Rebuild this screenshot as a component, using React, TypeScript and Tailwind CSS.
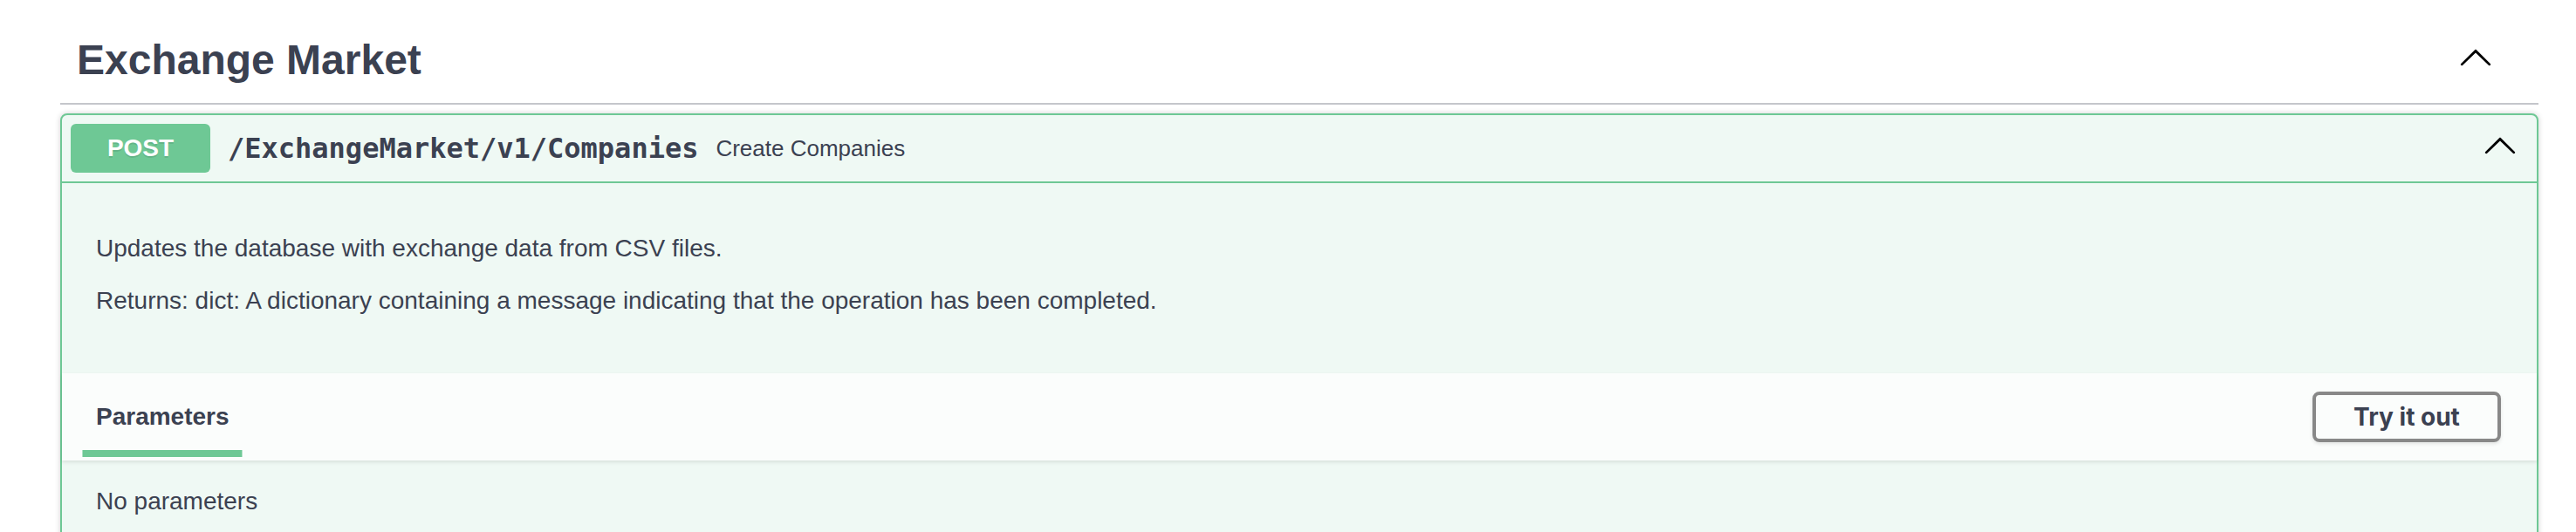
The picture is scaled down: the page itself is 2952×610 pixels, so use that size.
import React from "react";

const ArrowUp = ({ className }: { className?: string }) => (
  <svg
    width="40"
    height="40"
    viewBox="0 0 20 20"
    className={className}
    aria-hidden="true"
  >
    <path
      fill="#000"
      d="M17.418 14.908c.272.268.709.268.979 0s.271-.701 0-.969l-7.908-7.83c-.27-.268-.707-.268-.979 0l-7.908 7.83c-.27.268-.27.701 0 .969.271.268.709.268.979 0L10 7.767l7.418 7.141z"
    />
  </svg>
);

export default function App() {
  return (
    <div className="min-h-screen bg-white font-['Liberation_Sans',Arial,sans-serif] text-[#3b4151]">
      <div className="pl-[69px] pr-[43px] pt-[21px]">
        {/* Tag header */}
        <div className="flex items-center border-b-2 border-[#c4c6cb] pl-[19px] pr-[52px] pt-[20px] pb-[21px]">
          <h3 className="flex-1 text-[48px] font-bold leading-[56px] text-[#3b4151]">
            Exchange Market
          </h3>
          <ArrowUp className="mb-[8px] shrink-0" />
        </div>

        {/* Operation block */}
        <div className="mt-[10px] rounded-[8px] border-2 border-[#6ec895] bg-[#eff9f4] shadow-[0_0_6px_rgba(0,0,0,0.19)]">
          {/* Summary */}
          <div className="flex items-center border-b-2 border-[#6ec895] p-[10px]">
            <span className="flex h-[56px] w-[160px] shrink-0 items-center justify-center rounded-[6px] bg-[#6ec895] text-[28px] font-bold leading-none text-white [text-shadow:0_2px_0_rgba(0,0,0,0.1)]">
              POST
            </span>
            <span className="px-[20px] font-['DejaVu_Sans_Mono',monospace] text-[32px] font-bold leading-[40px] text-[#3b4151]">
              /ExchangeMarket/v1/Companies
            </span>
            <span className="flex-1 text-[26px] leading-[32px] text-[#3b4151]">
              Create Companies
            </span>
            <ArrowUp className="mb-[8px] mr-[12px] shrink-0" />
          </div>

          {/* Body */}
          <div>
            <div className="pl-[39px] pr-[40px] pt-[55px] pb-[63px] text-[28px] leading-[40px]">
              <p>Updates the database with exchange data from CSV files.</p>
              <p className="mt-[20px]">
                Returns: dict: A dictionary containing a message indicating that
                the operation has been completed.
              </p>
            </div>

            {/* Parameters section header */}
            <div className="relative z-10 flex h-[100px] items-center bg-[#fbfdfc] pl-[39px] pr-[41px] shadow-[0_2px_4px_rgba(0,0,0,0.1)]">
              <div className="flex-1">
                <h4 className="relative inline-block text-[28px] font-bold leading-[32px] text-[#3b4151]">
                  Parameters
                  <span className="absolute -bottom-[30px] left-1/2 h-[8px] w-[120%] -translate-x-1/2 bg-[#6ec895]" />
                </h4>
              </div>
              <button className="flex h-[58px] w-[216px] items-center justify-center rounded-[8px] border-4 border-[#888888] bg-transparent font-['Inter',sans-serif] text-[28px] font-bold text-[#3b4151] shadow-[0_2px_4px_rgba(0,0,0,0.1)]">
                Try it out
              </button>
            </div>

            <div className="pl-[39px] pt-[27px] pb-[60px] text-[28px] leading-[40px]">
              <p>No parameters</p>
            </div>
          </div>
        </div>
      </div>
    </div>
  );
}
